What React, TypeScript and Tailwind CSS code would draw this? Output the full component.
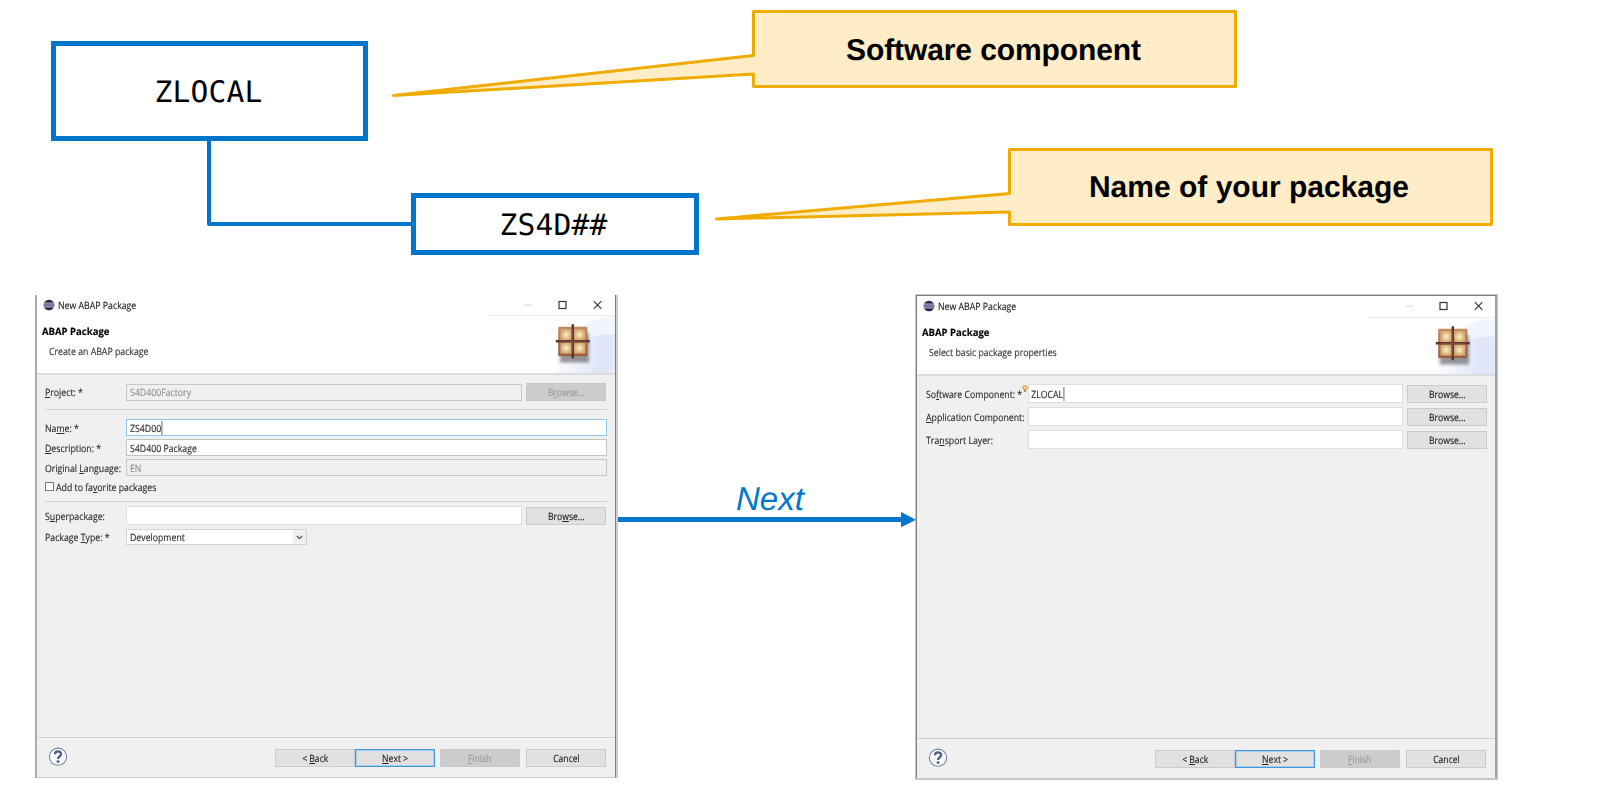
import type { ReactNode } from "react";

function EclipseIcon() {
  return (
    <svg width="12" height="12" viewBox="0 0 12 12" className="shrink-0">
      <circle cx="5.4" cy="6" r="5.2" fill="#f0a24a" />
      <circle cx="6.1" cy="6" r="5.3" fill="#2c2255" />
      <path d="M1 4.1h10.2M.8 6h10.6M1 7.9h10.2" stroke="#c9c6dd" strokeWidth="1" />
    </svg>
  );
}

function PackageIcon() {
  return (
    <svg width="60" height="57" viewBox="0 0 60 57" className="block shrink-0">
      <defs>
        <linearGradient id="sky" x1="0" x2="1" y1="0" y2="0">
          <stop offset="0" stopColor="#ffffff" />
          <stop offset="0.75" stopColor="#dfe5f8" />
          <stop offset="1" stopColor="#e3e9f9" />
        </linearGradient>
        <radialGradient id="tile">
          <stop offset="0" stopColor="#fbf1c8" />
          <stop offset="1" stopColor="#d2a76c" />
        </radialGradient>
        <linearGradient id="frame" x1="0" x2="0" y1="0" y2="1">
          <stop offset="0" stopColor="#c48a66" />
          <stop offset="1" stopColor="#9c5a42" />
        </linearGradient>
        <filter id="soft" x="-30%" y="-30%" width="160%" height="160%">
          <feGaussianBlur stdDeviation="1.5" />
        </filter>
      </defs>
      <path d="M0 57C2 24 26 2 60 0V57Z" fill="#f0f4fd" opacity="0.9" />
      <path d="M-4 57C6 32 30 18 60 18V57Z" fill="url(#sky)" />
      <path d="M-4 57C-2 30 16 10 30 6L0 0Z" fill="#fff" />
      <rect x="5" y="17.5" width="29" height="29" fill="#555" opacity="0.6" filter="url(#soft)" />
      <rect x="3.2" y="10.7" width="29.2" height="29.2" rx="1" fill="url(#frame)" />
      <rect x="5.4" y="13" width="11.6" height="11.4" fill="url(#tile)" />
      <rect x="18.7" y="13" width="11.6" height="11.4" fill="url(#tile)" />
      <rect x="5.4" y="26.3" width="11.6" height="11.4" fill="url(#tile)" />
      <rect x="18.7" y="26.3" width="11.6" height="11.4" fill="url(#tile)" />
      <path d="M17.8 8.3v34M.8 25.3h34" stroke="#5e3430" strokeWidth="2.5" />
      <path d="M17.8 12v26M5 25.3h26" stroke="#8a5648" strokeWidth="0.8" />
    </svg>
  );
}

function WindowControls() {
  return (
    <svg width="80" height="12" viewBox="0 0 80 12" className="shrink-0">
      <path d="M1.5 6.2h8" stroke="#d4d4d4" strokeWidth="1" />
      <rect x="36" y="2.5" width="7" height="7" fill="none" stroke="#333" strokeWidth="1.2" />
      <path d="M70.8 2.2l7.6 7.6M78.4 2.2l-7.6 7.6" stroke="#333" strokeWidth="1.1" />
    </svg>
  );
}

function U({ children }: { children: ReactNode }) {
  return <span className="underline decoration-[1px] underline-offset-[1px]">{children}</span>;
}

/* Condensed UI text, anchored at its left edge. */
function T({ children, className = "" }: { children: ReactNode; className?: string }) {
  return <span className={`inline-block origin-left scale-x-[0.875] ${className}`}>{children}</span>;
}

function Button({
  children,
  kind = "normal",
  className = "",
}: {
  children: ReactNode;
  kind?: "normal" | "disabled" | "focus";
  className?: string;
}) {
  const look =
    kind === "disabled"
      ? "border border-[#c8c8c8] bg-[#cccccc] text-[#9a9a9a]"
      : kind === "focus"
        ? "border border-[#3f97dd] bg-[#e1e1e1] text-[#222] ring-1 ring-inset ring-[#a5cdec]"
        : "border border-[#cbcbcb] bg-[#e1e1e1] text-[#222]";
  return (
    <div className={`flex h-[18px] w-[80px] shrink-0 items-center justify-center ${look} ${className}`}>
      <span className="inline-block scale-x-[0.86]">{children}</span>
    </div>
  );
}

function Field({ children, className = "" }: { children?: ReactNode; className?: string }) {
  return (
    <div className={`flex items-center border pl-[3px] ${className}`}>
      <T className="flex items-center">{children}</T>
    </div>
  );
}

function Header({ title, titleBarClass }: { title: string; titleBarClass: string }) {
  return (
    <div className="flex h-[78px] overflow-hidden bg-white">
      <div className="flex flex-1 flex-col">
        <div className="flex h-[19px] items-center pl-[6px]">
          <EclipseIcon />
          <T className="ml-[3px] text-[#222]">New ABAP Package</T>
        </div>
        <div className="mt-[9px] h-4 pl-[5px] leading-4 font-bold text-black">
          <span className="inline-block origin-left scale-x-[0.955]">ABAP Package</span>
        </div>
        <div className="mt-[4px] h-4 pl-[12px] leading-4 text-[#333]">
          <T>{title}</T>
        </div>
      </div>
      <div className="flex w-[127px] flex-col items-end">
        <div className={`flex w-full shrink-0 items-center justify-end border-b border-[#ededed] ${titleBarClass}`}>
          <WindowControls />
        </div>
        <PackageIcon />
      </div>
    </div>
  );
}

function Footer() {
  return (
    <div className="flex h-[40px] shrink-0 items-start border-t border-[#cfcfcf]">
      <svg width="20" height="20" viewBox="0 0 20 20" className="mt-[9px] ml-[11px]">
        <circle cx="10" cy="9.7" r="8.6" fill="#f8f9fb" stroke="#7283a5" strokeWidth="1.1" />
        <path d="M6.9 7.2C7.1 3.4 13.3 3.6 13.1 7.1C13 9.5 10 9.3 10 12" fill="none" stroke="#465b86" strokeWidth="2.2" />
        <circle cx="10" cy="14.6" r="1.4" fill="#465b86" />
      </svg>
      <div className="mt-[11px] ml-auto flex pr-[9px]">
        <Button>&lt; <U>B</U>ack</Button>
        <Button kind="focus"><U>N</U>ext &gt;</Button>
        <Button kind="disabled" className="ml-[5px]"><U>F</U>inish</Button>
        <Button className="ml-[6px]">Cancel</Button>
      </div>
    </div>
  );
}

function Caret() {
  return <span className="h-[13px] w-[2px] shrink-0 border-r border-[#555]" />;
}

function FormLabel({ children }: { children: ReactNode }) {
  return (
    <span className="w-[81px] shrink-0">
      <T>{children}</T>
    </span>
  );
}

function CreateDialog() {
  return (
    <section className="absolute top-[295px] left-[35px] flex h-[483px] w-[583px] border-r-2 border-l-2 border-r-[#cdcdcd] border-l-[#ababab]">
      <div className="flex flex-1 flex-col border-r border-b border-r-[#7d7d7d] border-b-[#cdcdcd] bg-[#f0f0f0]">
        <Header title="Create an ABAP package" titleBarClass="h-[21px] pr-[12px] pb-px" />
        <div className="flex flex-1 flex-col border-t-2 border-[#dcdcdc] pr-[8px] pl-[8px] text-[#2b2b2b]">
          <div className="mt-[8px] flex h-[18px] items-center">
            <FormLabel><U>P</U>roject: *</FormLabel>
            <Field className="h-[17px] w-[396px] border-[#c6c6c6] text-[#949494]">S4D400Factory</Field>
            <Button kind="disabled" className="ml-[4px]">B<U>r</U>owse...</Button>
          </div>
          <div className="mt-[8px] h-px bg-[#d0d0d0]" />
          <div className="mt-[9px] flex h-[17px] items-center">
            <FormLabel>Na<U>m</U>e: *</FormLabel>
            <Field className="h-[17px] flex-1 border-[#93c4ea] bg-white">ZS4D00<Caret /></Field>
          </div>
          <div className="mt-[3px] flex h-[17px] items-center">
            <FormLabel><U>D</U>escription: *</FormLabel>
            <Field className="h-[17px] flex-1 border-[#c3c3c3] bg-white">S4D400 Package</Field>
          </div>
          <div className="mt-[3px] flex h-[17px] items-center">
            <FormLabel>Original <U>L</U>anguage:</FormLabel>
            <Field className="h-[17px] flex-1 border-[#c6c6c6] text-[#8f8f8f]">EN</Field>
          </div>
          <div className="mt-[5px] flex h-[11px] items-center">
            <span className="h-[9px] w-[9px] border border-[#777] bg-white" />
            <T className="ml-[2px]">Add to fa<U>v</U>orite packages</T>
          </div>
          <div className="mt-[9px] h-px bg-[#d0d0d0]" />
          <div className="mt-[4px] flex h-[19px] items-center">
            <FormLabel>S<U>u</U>perpackage:</FormLabel>
            <Field className="h-[19px] w-[396px] border-[#dedede] bg-white" />
            <Button className="ml-[4px]">Bro<U>w</U>se...</Button>
          </div>
          <div className="mt-[4px] flex h-[16px] items-center">
            <FormLabel>Package <U>T</U>ype: *</FormLabel>
            <div className="flex h-[16px] w-[181px] items-center justify-between border border-[#d2d2d2] bg-white pl-[3px]">
              <T>Development</T>
              <span className="flex h-full w-[13px] items-center justify-center bg-[#f0f0f0]">
                <svg width="7" height="5" viewBox="0 0 7 5">
                  <path d="M.8.9l2.7 2.7L6.2.9" fill="none" stroke="#444" strokeWidth="1.2" />
                </svg>
              </span>
            </div>
          </div>
        </div>
        <Footer />
      </div>
    </section>
  );
}

function PropertyRow({ label, hint, children, className }: { label: ReactNode; hint?: ReactNode; children?: ReactNode; className: string }) {
  return (
    <div className={`flex h-[19px] items-center ${className}`}>
      <span className="relative w-[102px] shrink-0">
        <T>{label}</T>
        {hint}
      </span>
      <Field className="h-[19px] w-[375px] border-[#dedede] bg-white">{children}</Field>
      <Button className="ml-[4px]">Browse...</Button>
    </div>
  );
}

function PropertiesDialog() {
  return (
    <section className="absolute top-[294px] left-[915px] flex h-[486px] w-[583px] border-t border-r border-b-2 border-l border-[#c6c6c6]">
      <div className="flex flex-1 flex-col border-t border-r-2 border-l border-t-[#7f7f7f] border-r-[#a2a2a2] border-l-[#7f7f7f] bg-[#f0f0f0]">
        <Header title="Select basic package properties" titleBarClass="h-[22px] pr-[11px] pb-[2px]" />
        <div className="flex flex-1 flex-col border-t-2 border-[#dcdcdc] pl-[9px] text-[#2b2b2b]">
          <PropertyRow
            className="mt-[8px]"
            label={<>So<U>f</U>tware Component: *</>}
            hint={
              <svg width="6" height="8" viewBox="0 0 6 8" className="absolute -top-[4px] right-0">
                <circle cx="3" cy="2.6" r="2" fill="#fbe3b4" stroke="#e89a3c" strokeWidth="1.2" />
                <path d="M2 6h2" stroke="#777" strokeWidth="1.6" />
              </svg>
            }
          >
            <span className="-ml-px">ZLOCAL</span>
            <Caret />
          </PropertyRow>
          <PropertyRow className="mt-[4px]" label={<><U>A</U>pplication Component:</>} />
          <PropertyRow className="mt-[4px]" label={<>Tra<U>n</U>sport Layer:</>} />
        </div>
        <Footer />
      </div>
    </section>
  );
}

export default function App() {
  return (
    <main className="relative h-[790px] w-[1600px] overflow-hidden bg-white font-['Open_Sans','Noto_Sans',sans-serif] text-[10px] leading-none whitespace-nowrap [text-rendering:geometricPrecision]">
      <div className="contents [-webkit-text-stroke:0.15px]">
        <CreateDialog />
        <PropertiesDialog />
      </div>

      <svg width="1600" height="790" className="pointer-events-none absolute inset-0">
        <path d="M209 139V224H384M384 224h30" fill="none" stroke="#0076cb" strokeWidth="4" strokeLinejoin="round" />
        <g fill="#feedc6" stroke="#f0ab00" strokeWidth="3" strokeLinejoin="round">
          <path d="M753.5 11.5H1235.5V86.5H753.5V74L393.5 95.5L753.5 55.5Z" />
          <path d="M1009.5 149.5H1491.5V224.5H1009.5V212L716.5 219L1009.5 193.5Z" />
        </g>
        <path d="M618 519.5H902" stroke="#0076cb" strokeWidth="5" />
        <path d="M901 512L916 519.7L901 527.3Z" fill="#0076cb" />
      </svg>

      <div className="absolute top-[41px] left-[51px] flex h-[100px] w-[317px] items-center justify-center border-5 border-[#0076cb] bg-white pt-[3px] pr-[2px] font-['DejaVu_Sans_Mono',monospace] text-[29.6px] tracking-[0.15px] text-black">
        ZLOCAL
      </div>
      <div className="absolute top-[193px] left-[411px] flex h-[62px] w-[288px] items-center justify-center border-5 border-[#0076cb] bg-white pt-[4px] pr-[3px] font-['DejaVu_Sans_Mono',monospace] text-[29.6px] tracking-[0.15px] text-black">
        ZS4D##
      </div>
      <div className="absolute top-[10px] left-[752px] flex h-[78px] w-[485px] items-center justify-center pt-[3px] pr-[2px] font-['Liberation_Sans',sans-serif] text-[30px] font-bold tracking-[-0.1px] text-black">
        Software component
      </div>
      <div className="absolute top-[147px] left-[1008px] flex h-[78px] w-[485px] items-center justify-center pt-[3px] pr-[3px] font-['Liberation_Sans',sans-serif] text-[30px] font-bold text-black">
        Name of your package
      </div>
      <div className="absolute top-[482px] left-[736px] font-['Liberation_Sans',sans-serif] text-[33px] text-[#0076cb] italic">Next</div>
    </main>
  );
}
